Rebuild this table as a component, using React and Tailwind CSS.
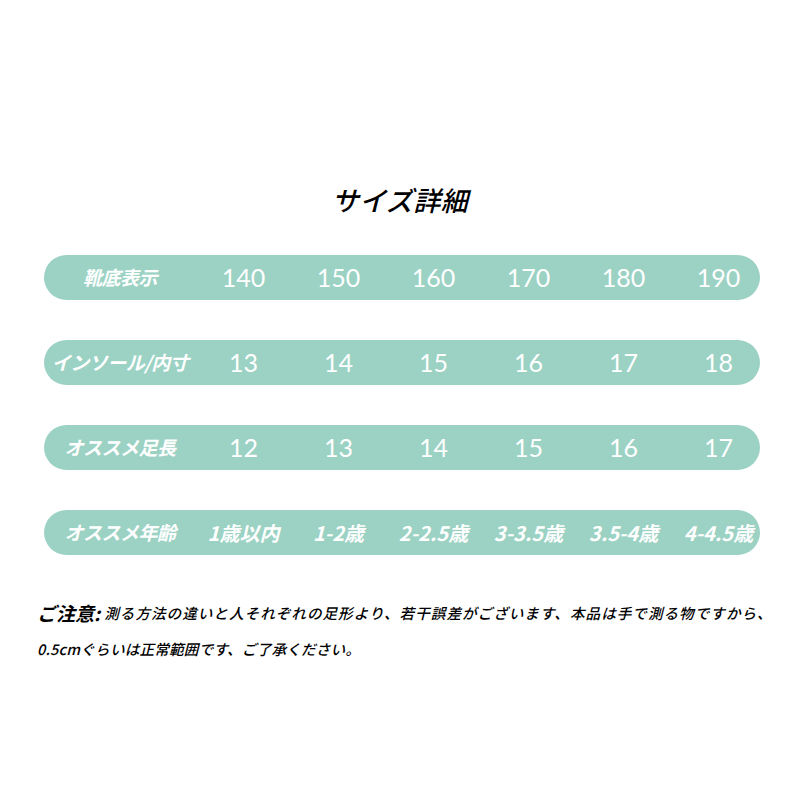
import React from "react";

const jp = { fontFamily: '"Noto Sans CJK JP", "Noto Sans", sans-serif' };
const num = { fontFamily: 'Lato, "Noto Sans", sans-serif' };

const rows = [
  { label: "靴底表示", values: ["140", "150", "160", "170", "180", "190"], kind: "num" },
  { label: "インソール/内寸", values: ["13", "14", "15", "16", "17", "18"], kind: "num" },
  { label: "オススメ足長", values: ["12", "13", "14", "15", "16", "17"], kind: "num" },
  { label: "オススメ年齢", values: ["1歳以内", "1-2歳", "2-2.5歳", "3-3.5歳", "3.5-4歳", "4-4.5歳"], kind: "age" },
];

function Row({ row }) {
  return (
    <div className="ml-[44px] w-[716px] h-[45px] rounded-full bg-[#9bd2c4] overflow-hidden flex items-center text-white">
      <div className="w-[152px] shrink-0 flex justify-center text-[19px] font-bold italic tracking-[-0.5px]" style={jp}>
        {row.label}
      </div>
      {row.values.map((v, i) => (
        <div key={i} className="w-[95px] shrink-0 flex justify-center">
          {row.kind === "num" ? (
            <span className="text-[25px] font-normal leading-none" style={num}>{v}</span>
          ) : (
            <span className="text-[20px] font-bold italic whitespace-nowrap" style={jp}>{v}</span>
          )}
        </div>
      ))}
    </div>
  );
}

export default function App() {
  return (
    <div className="w-[800px] h-[800px] bg-white relative overflow-hidden">
      <div className="pt-[181px] h-[255px] flex justify-center">
        <div className="text-[27px] font-medium italic text-black leading-[38px] tracking-[0.5px]" style={jp}>
          サイズ詳細
        </div>
      </div>
      <div className="flex flex-col gap-[40px]">
        {rows.map((r, i) => (
          <Row key={i} row={r} />
        ))}
      </div>
      <div className="mt-[40px] pl-[37px] text-black italic" style={jp}>
        <div className="h-[36px] flex items-center whitespace-nowrap">
          <span className="text-[19px] font-bold mr-[4px]">ご注意:</span>
          <span className="text-[14.6px] font-medium tracking-[1px]">
            測る方法の違いと人それぞれの足形より、若干誤差がございます、本品は手で測る物ですから、
          </span>
        </div>
        <div className="h-[36px] flex items-center text-[14.6px] font-medium whitespace-nowrap tracking-[0.2px]">
          0.5cmぐらいは正常範囲です、ご了承ください。
        </div>
      </div>
    </div>
  );
}
